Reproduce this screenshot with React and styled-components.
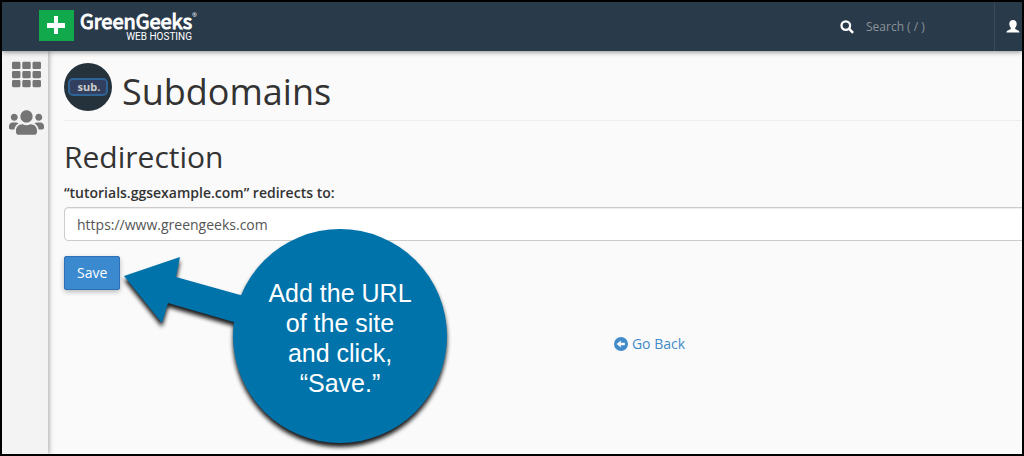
import React from 'react';
import styled, { createGlobalStyle } from 'styled-components';
import { FaTh, FaUsers } from 'react-icons/fa';

const GlobalStyle = createGlobalStyle`
  *, *::before, *::after { box-sizing: border-box; }
  body {
    margin: 0;
    background: #fafafa;
    color: #333;
    font: 14px/20px "Open Sans", "Noto Sans", sans-serif;
  }
`;

const Frame = styled.div`
  position: relative;
  display: flex;
  flex-direction: column;
  min-height: 100vh;
  border: 2px solid #000;
  overflow: hidden;
`;

const Header = styled.header`
  position: relative;
  z-index: 2;
  display: flex;
  align-items: center;
  justify-content: space-between;
  height: 49px;
  background: #293a4a;
  box-shadow: 0 1px 5px rgba(0, 0, 0, 0.45);
`;

const Brand = styled.a`
  display: flex;
  align-items: flex-start;
  gap: 6px;
  margin-left: 37px;
  color: #fff;
  text-decoration: none;
`;

const BrandMark = styled.svg`
  display: block;
  width: 35px;
  height: 31px;
`;

const BrandText = styled.span`
  display: flex;
  flex-direction: column;
  align-items: flex-end;
`;

const BrandName = styled.span`
  display: flex;
  font-family: "Noto Sans CJK SC", "Open Sans", sans-serif;
  font-size: 20px;
  line-height: 21px;
  font-weight: 400;
  -webkit-text-stroke: 1px currentColor;
`;

const Registered = styled.span`
  font-family: "Open Sans", sans-serif;
  font-size: 6px;
  line-height: 10px;
  -webkit-text-stroke: 0;
`;

const BrandTag = styled.span`
  padding-right: 5px;
  font-family: Roboto, "Open Sans", sans-serif;
  font-size: 10px;
  line-height: 12px;
`;

const HeaderTools = styled.div`
  display: flex;
  align-self: stretch;
`;

const SearchBox = styled.label`
  display: flex;
  align-items: center;
  gap: 12px;
  width: 154px;
  color: #fff;
`;

const SearchInput = styled.input`
  flex: 1;
  min-width: 0;
  padding: 0;
  border: 0;
  outline: 0;
  background: transparent;
  color: #fff;
  font: 12px/20px "Open Sans", "Noto Sans", sans-serif;

  &::placeholder { color: #8b9299; opacity: 1; }
`;

const UserButton = styled.button`
  display: flex;
  align-items: center;
  width: 28px;
  padding: 0 0 0 11px;
  border: 0;
  border-left: 1px solid #3a4a59;
  background: transparent;
  color: #fff;
`;

const Glyph = styled.svg`
  display: block;
  flex: none;
  width: 14px;
  height: 14px;
  fill: currentColor;
`;

const Body = styled.div`
  display: flex;
  flex: 1;
`;

const Sidebar = styled.nav`
  position: relative;
  z-index: 1;
  display: flex;
  flex: none;
  flex-direction: column;
  align-items: center;
  gap: 16px;
  width: 46px;
  padding: 9px 0 0 2px;
  background: #f3f3f3;
  box-shadow: 1px 0 5px rgba(0, 0, 0, 0.35);
`;

const NavLink = styled.a`
  display: block;
  color: #757575;

  svg { display: block; }
`;

const Main = styled.main`
  flex: 1;
  min-width: 0;
  padding: 12px 0 16px 16px;
  overflow: hidden;
`;

/* The form is wider than the visible area and runs out past its right edge. */
const Content = styled.div`
  margin-right: -213px;
`;

const PageHeader = styled.div`
  display: flex;
  gap: 10px;
  height: 58px;
  border-bottom: 1px solid #eee;
`;

const SubIcon = styled.span`
  display: flex;
  align-items: center;
  justify-content: center;
  flex: none;
  width: 48px;
  height: 48px;
  border-radius: 50%;
  background: #25323c;
`;

const SubBadge = styled.span`
  width: 40px;
  height: 18px;
  padding-left: 2px;
  border: 2px solid #2f6496;
  border-radius: 5px;
  background: #323f5e;
  color: #ccc;
  font-size: 11px;
  line-height: 14px;
  font-weight: 700;
  text-align: center;
`;

const Title = styled.h1`
  margin: 9px 0 0;
  font-size: 36px;
  line-height: 40px;
  font-weight: 400;
`;

const Subtitle = styled.h2`
  margin: 20px 0 10px;
  font-size: 30px;
  line-height: 32px;
  font-weight: 400;
`;

const FieldLabel = styled.label`
  display: block;
  margin-bottom: 4px;
  font-weight: 600;
`;

const UrlInput = styled.input`
  display: block;
  width: 100%;
  height: 34px;
  padding: 6px 12px;
  border: 1px solid #ccc;
  border-radius: 4px;
  background: #fff;
  box-shadow: inset 0 1px 1px rgba(0, 0, 0, 0.075);
  color: #555;
  font: inherit;
`;

const SaveButton = styled.button`
  display: block;
  margin-top: 15px;
  padding: 6px 12px;
  border: 1px solid #2c71b3;
  border-radius: 2px;
  background: #3b8ad0;
  box-shadow: 0 2px 5px rgba(0, 0, 0, 0.26);
  color: #fff;
  font: inherit;
`;

const BackRow = styled.div`
  display: flex;
  justify-content: center;
  margin-top: 44px;
`;

const BackLink = styled.a`
  display: flex;
  align-items: center;
  gap: 4px;
  color: #428bca;
  text-decoration: none;
`;

/* Annotation balloon that floats over the form. */
const Callout = styled.aside`
  position: absolute;
  z-index: 3;
  top: 220px;
  left: 114px;
  display: flex;
  width: 340px;
  height: 230px;
  pointer-events: none;
`;

const CalloutShape = styled.svg`
  position: absolute;
  inset: 0;
  width: 100%;
  height: 100%;
  overflow: visible;
  fill: #0073ab;
  filter: drop-shadow(0 4px 2px rgba(0, 0, 0, 0.9));
`;

const CalloutText = styled.p`
  position: relative;
  width: 160px;
  margin: 56px 0 0 144px;
  color: #fff;
  font: 25px/30px "Liberation Sans", Arial, sans-serif;
  text-align: center;
`;

export default function App() {
  return (
    <Frame>
      <GlobalStyle />
      <Header>
        <Brand href="#home">
          <BrandMark viewBox="0 0 35 31" aria-hidden="true">
            <rect width="35" height="31" fill="#12a84c" />
            <path d="M15 6h4v7h7v5h-7v6h-4v-6H8v-5h7z" fill="#fff" />
          </BrandMark>
          <BrandText>
            <BrandName>
              GreenGeeks<Registered>®</Registered>
            </BrandName>
            <BrandTag>WEB HOSTING</BrandTag>
          </BrandText>
        </Brand>
        <HeaderTools>
          <SearchBox>
            <Glyph viewBox="0 0 14 14" aria-hidden="true">
              <circle cx="5.8" cy="5.6" r="4.3" fill="none" stroke="currentColor" strokeWidth="2.3" />
              <path d="M8 9.6 9.8 7.8 14 12 12.2 13.8z" />
            </Glyph>
            <SearchInput type="search" placeholder="Search ( / )" aria-label="Search" />
          </SearchBox>
          <UserButton type="button" aria-label="Account">
            <Glyph viewBox="0 0 14 14" aria-hidden="true">
              <path d="M7 0c2.200 0 3.700 1.400 3.700 3.700 0 1.700-.6 3.100-1.500 4v1.300c.5.700 4.300 1.200 4.400 3.500H.4c.1-2.300 3.900-2.800 4.400-3.500V7.700c-.9-.9-1.500-2.300-1.500-4C3.300 1.400 4.800 0 7 0z" />
            </Glyph>
          </UserButton>
        </HeaderTools>
      </Header>
      <Body>
        <Sidebar>
          <NavLink href="#tools" aria-label="Tools">
            <FaTh size={29} />
          </NavLink>
          <NavLink href="#users" aria-label="User manager">
            <FaUsers size={35} />
          </NavLink>
        </Sidebar>
        <Main>
          <Content>
            <PageHeader>
              <SubIcon>
                <SubBadge>sub.</SubBadge>
              </SubIcon>
              <Title>Subdomains</Title>
            </PageHeader>
            <form onSubmit={(e) => e.preventDefault()}>
              <Subtitle>Redirection</Subtitle>
              <FieldLabel htmlFor="url">“tutorials.ggsexample.com” redirects to:</FieldLabel>
              <UrlInput id="url" type="text" defaultValue="https://www.greengeeks.com" />
              <SaveButton type="submit">Save</SaveButton>
            </form>
            <BackRow>
              <BackLink href="#back">
                <Glyph viewBox="0 0 14 14" aria-hidden="true">
                  <path
                    fillRule="evenodd"
                    d="M7 0a7 7 0 1 1 0 14A7 7 0 0 1 7 0zM2.600 7 6.800 10.600V8.300h4V5.700h-4V3.400z"
                  />
                </Glyph>
                Go Back
              </BackLink>
            </BackRow>
          </Content>
        </Main>
      </Body>
      <Callout>
        <CalloutShape viewBox="0 0 340 230" aria-hidden="true">
          <circle cx="224" cy="114" r="107" />
          <path d="M8 54 64 35 60 55 135 76 128 103 52 81 46 101z" />
        </CalloutShape>
        <CalloutText>
          Add the URL
          <br />
          of the site
          <br />
          and click,
          <br />
          “Save.”
        </CalloutText>
      </Callout>
    </Frame>
  );
}
